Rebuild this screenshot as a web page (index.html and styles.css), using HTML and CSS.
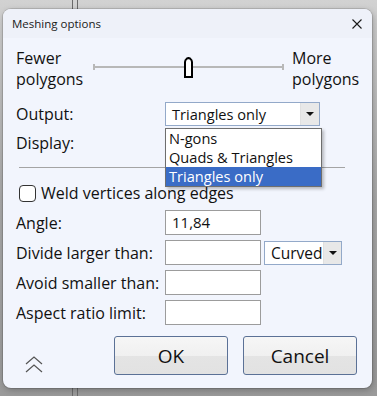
FILE: index.html
```html
<!DOCTYPE html>
<html lang="en">
<head>
  <meta charset="UTF-8">
  <title>Meshing options</title>
  <link rel="stylesheet" href="styles.css">
</head>
<body>
  <!-- Dialog Window -->
  <div class="dialog">
    <div class="titlebar">
      <span class="title">Meshing options</span>
      <svg class="close" width="10" height="10" viewBox="0 0 10 10">
        <path d="M0.5 0.5 L9.5 9.5 M9.5 0.5 L0.5 9.5" stroke="#1a1a1a" stroke-width="1.1" fill="none"/>
      </svg>
    </div>

    <div class="content">
      <!-- Density Slider -->
      <div class="slider-row">
        <div class="slider-end">Fewer<br>polygons</div>
        <div class="slider">
          <div class="track"></div>
          <svg class="thumb" width="9" height="21" viewBox="0 0 9 21">
            <path d="M1 20 L1 5 Q1 3 3 1.5 L4.5 1 L6 1.5 Q8 3 8 5 L8 20 Z" fill="#fff" stroke="#000" stroke-width="2"/>
          </svg>
        </div>
        <div class="slider-end">More<br>polygons</div>
      </div>

      <!-- Output / Display -->
      <div class="form-grid top-grid">
        <label>Output:</label>
        <div class="combo wide">
          <span class="combo-text">Triangles only</span>
          <span class="combo-arrow"></span>
          <ul class="dropdown">
            <li>N-gons</li>
            <li>Quads &amp; Triangles</li>
            <li class="selected">Triangles only</li>
          </ul>
        </div>
        <label>Display:</label>
        <div></div>
      </div>

      <div class="separator"></div>

      <label class="check-row">
        <span class="checkbox"></span>
        <span class="check-label">Weld vertices along edges</span>
      </label>

      <!-- Numeric Fields -->
      <div class="form-grid fields">
        <label>Angle:</label>
        <div class="field-row"><div class="input">11,84</div></div>
        <label>Divide larger than:</label>
        <div class="field-row">
          <div class="input"></div>
          <div class="combo small">
            <span class="combo-text">Curved</span>
            <span class="combo-arrow"></span>
          </div>
        </div>
        <label>Avoid smaller than:</label>
        <div class="field-row"><div class="input"></div></div>
        <label>Aspect ratio limit:</label>
        <div class="field-row"><div class="input"></div></div>
      </div>

      <!-- Bottom Buttons -->
      <div class="footer">
        <svg class="more" width="18" height="18" viewBox="0 0 18 18">
          <path d="M1 9 L9 2 L17 9 M1 17 L9 10 L17 17" stroke="#555" stroke-width="1.2" fill="none"/>
        </svg>
        <div class="buttons">
          <button>OK</button>
          <button>Cancel</button>
        </div>
      </div>
    </div>
  </div>
</body>
</html>
```

FILE: styles.css
```css
/* General Styles */
body {
  margin: 0;
  padding: 9px 0 0 3px;
  height: 396px;
  box-sizing: border-box;
  overflow: hidden;
  font-family: 'Open Sans', 'Noto Sans', sans-serif;
  color: #111;
  background:
    linear-gradient(90deg, transparent 72px, #6a6a6a 72px, #6a6a6a 73px, transparent 73px, transparent 77px, #6a6a6a 77px, #6a6a6a 78px, transparent 78px),
    linear-gradient(180deg, #d2d2d2 0, #c8c8c8 40px, #a8a8a8 200px, #9a9a9a 396px);
}

/* Dialog Window */
.dialog {
  width: 369px;
  height: 379px;
  border-radius: 8px;
  background-color: #f2f5fd;
  box-shadow: 0 0 0 1px rgba(0, 0, 0, 0.12), 1px 2px 6px rgba(0, 0, 0, 0.25);
  overflow: hidden;
}

.titlebar {
  height: 29px;
  display: flex;
  align-items: center;
  justify-content: space-between;
  padding: 0 10px 0 9px;
  background-color: #eef1f9;
}

.title {
  font-size: 11.5px;
  color: #1a1a1a;
}

.content {
  padding: 10px 15px 0 13px;
  font-size: 16px;
}

/* Density Slider */
.slider-row {
  display: flex;
  align-items: flex-start;
  height: 42px;
}

.slider-end {
  line-height: 21px;
  width: 77px;
  flex-shrink: 0;
}

.slider-row .slider-end:last-child {
  width: auto;
  margin-left: 8px;
}

.slider {
  position: relative;
  width: 191px;
  height: 42px;
  flex-shrink: 0;
}

.track {
  margin-top: 18px;
  height: 2px;
  background-color: #b8b8b8;
}

.slider::before,
.slider::after {
  content: "";
  position: absolute;
  top: 16px;
  width: 2px;
  height: 6px;
  background-color: #b8b8b8;
}

.slider::before { left: 0; }
.slider::after { right: 0; }

.thumb {
  position: absolute;
  left: 91px;
  top: 9px;
}

/* Forms */
.form-grid {
  display: grid;
  grid-template-columns: 149px 1fr;
  align-items: center;
}

.top-grid {
  margin-top: 11px;
  grid-auto-rows: 25px;
  row-gap: 4px;
}

.fields {
  margin-top: 7px;
  grid-auto-rows: 25px;
  row-gap: 5px;
}

.field-row {
  display: flex;
  gap: 3px;
  height: 25px;
  font-size: 15px;
}

.input {
  width: 96px;
  height: 25px;
  box-sizing: border-box;
  border: 1px solid #9c9c9c;
  background-color: #fff;
  padding: 0 6px;
  line-height: 23px;
}

.combo {
  position: relative;
  display: flex;
  height: 25px;
  box-sizing: border-box;
  border: 1px solid #93a9c9;
  background-color: #fff;
  font-size: 14.6px;
}

.combo.wide {
  width: 155px;
  height: 24px;
}

.combo.small {
  width: 78px;
  height: 24px;
  margin-top: 1px;
  font-size: 15.5px;
}

.combo-text {
  flex: 1;
  padding-left: 6px;
  line-height: 22px;
  white-space: nowrap;
}

.combo-arrow {
  width: 18px;
  background-color: #e8e8e8;
  border-left: 1px solid #e0e0e0;
  position: relative;
}

.combo-arrow::after {
  content: "";
  position: absolute;
  left: 5px;
  top: 9px;
  border-left: 4px solid transparent;
  border-right: 4px solid transparent;
  border-top: 4px solid #111;
}

.dropdown {
  position: absolute;
  top: 25px;
  left: -1px;
  width: 155px;
  margin: 0;
  padding: 0;
  list-style: none;
  background-color: #fff;
  border: 1px solid #6e6e6e;
  box-shadow: 2px 2px 3px rgba(0, 0, 0, 0.25);
  z-index: 2;
}

.dropdown li {
  height: 19px;
  line-height: 19px;
  padding-left: 3px;
}

.dropdown li.selected {
  background-color: #3a6cc6;
  color: #fff;
}

.separator {
  margin: 12px 0 0 3px;
  height: 1px;
  width: 326px;
  background-color: #a4a4a4;
}

/* Weld Checkbox */
.check-row {
  display: flex;
  align-items: center;
  gap: 5px;
  margin: 15px 0 0 3px;
  height: 20px;
}

.check-label {
  line-height: 16px;
}

.checkbox {
  width: 17px;
  height: 17px;
  box-sizing: border-box;
  border: 1px solid #333;
  border-radius: 4px;
  background-color: #fff;
}

/* Bottom Buttons */
.footer {
  margin-top: 11px;
  display: flex;
  align-items: center;
  justify-content: space-between;
}

.more {
  margin: 16px 0 0 9px;
}

.buttons {
  display: flex;
  gap: 15px;
}

.buttons button {
  width: 114px;
  height: 39px;
  border: 1px solid #5b7196;
  border-radius: 3px;
  background: linear-gradient(180deg, #f6f6f6 0, #f0f0f0 50%, #e4e4e4 50%, #e2e2e2 100%);
  font-family: 'Open Sans', 'Noto Sans', sans-serif;
  font-size: 19px;
  color: #111;
  padding: 0;
}
```
